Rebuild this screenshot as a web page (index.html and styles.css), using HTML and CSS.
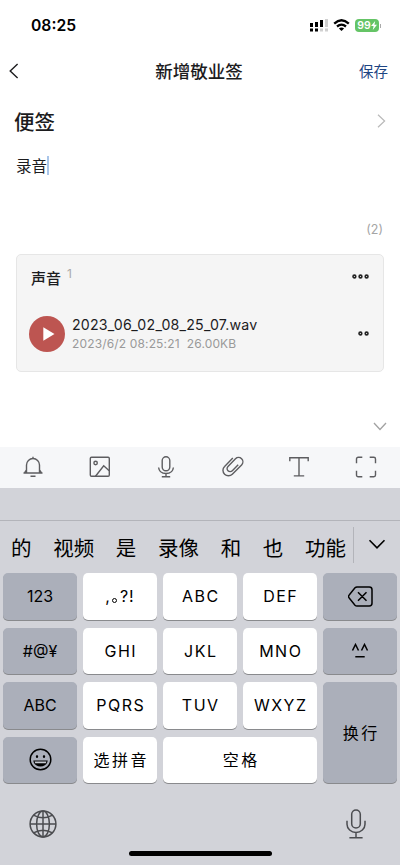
FILE: index.html
```html
<!DOCTYPE html>
<html lang="zh-CN">
<head>
    <meta charset="UTF-8">
    <meta name="viewport" content="width=device-width, initial-scale=1.0">
    <title>新增敬业签</title>
    <link rel="stylesheet" href="styles.css">
</head>
<body>
    <div class="status-bar">
        <span class="time">08:25</span>
        <div class="status-icons">
            <svg class="signal" width="18" height="13" viewBox="0 0 18 13">
                <path d="M0 4h3v4H0zM5 3h3v5H5zM10 1h3v7h-3zM0 9.5h3v3H0zM5 9.5h3v3H5z" fill="#000"/>
                <path d="M15 0h3v8h-3zM10 9.5h3v3h-3zM15 9.5h3v3h-3z" fill="#d0d0d0"/>
            </svg>
            <svg class="wifi" width="17" height="13" viewBox="0 0 17 13">
                <path d="M1.2 4.6Q8.5-2 15.8 4.6M4 7.5q4.5-3.8 9 0" fill="none" stroke="#000" stroke-width="2.3"/>
                <path d="M5.9 9.4q2.6-2 5.2 0L8.5 12z" fill="#000"/>
            </svg>
            <div class="battery">
                <span>99</span>
                <svg width="6" height="9" viewBox="0 0 6 9"><path d="M4.2 0L0 5h2.6L1.8 9 6 3.8H3.4z" fill="#fff"/></svg>
            </div>
            <i class="battery-cap"></i>
        </div>
    </div>

    <header class="nav">
        <svg class="back" width="10" height="16" viewBox="0 0 10 16"><path d="M8.6 1L1.2 8l7.4 7"/></svg>
        <h1>新增敬业签</h1>
        <span class="save">保存</span>
    </header>

    <main class="note">
        <div class="category">
            <h2>便签</h2>
            <svg width="9" height="14" viewBox="0 0 9 14"><path d="M1 .8L7.6 7 1 13.2"/></svg>
        </div>
        <div class="content"><span>录音</span><i class="caret"></i></div>
        <div class="count">(2)</div>
        <section class="card">
            <div class="card-head">
                <h3>声音</h3>
                <span class="num">1</span>
                <svg class="dots" width="17" height="5" viewBox="0 0 17 5"><circle cx="2.4" cy="2.5" r="1.4"/><circle cx="8.5" cy="2.5" r="1.4"/><circle cx="14.6" cy="2.5" r="1.4"/></svg>
            </div>
            <div class="file">
                <svg class="play" width="36" height="36" viewBox="0 0 36 36"><circle cx="18" cy="18" r="18" fill="#bd5551"/><path d="M14.3 11.2L25.5 18l-11.2 6.8z" fill="#fff"/></svg>
                <div class="file-info">
                    <div class="file-name">2023_06_02_08_25_07.wav</div>
                    <div class="file-meta">2023/6/2 08:25:21&nbsp; 26.00KB</div>
                </div>
                <svg class="dots" width="11" height="5" viewBox="0 0 11 5"><circle cx="2.4" cy="2.5" r="1.4"/><circle cx="8.6" cy="2.5" r="1.4"/></svg>
            </div>
        </section>
        <svg class="collapse" width="14" height="9" viewBox="0 0 14 9"><path d="M1 1l6 6.5L13 1"/></svg>
    </main>

    <div class="toolbar">
        <svg viewBox="0 0 22 22"><path d="M4.5 17V9a6.5 6.5 0 0 1 13 0v8M11 2.5V.8M1.5 17h19M8.5 20.3h5M4.5 14l-2 3M17.5 14l2 3"/></svg>
        <svg viewBox="0 0 22 22"><rect x="1.3" y="1.3" width="19" height="19" rx="1.2"/><circle cx="6.6" cy="7" r="1.7"/><path d="M6.5 20.3l8.2-10.5 5.5 5"/></svg>
        <svg viewBox="0 0 22 22"><rect x="7.2" y=".8" width="7.6" height="14" rx="3.8"/><path d="M3.6 11.5c.4 3.8 3.4 6 7.4 6s7-2.2 7.4-6M11 17.5v3M6.8 20.7h8.4"/></svg>
        <svg viewBox="0 0 22 22"><path d="M10.8 2L2.6 10.4a5.4 5.4 0 0 0 0 7.8 5.4 5.4 0 0 0 7.7 0l9.3-9.3a4.3 4.3 0 0 0-6.1-6.1L6 10.4a3 3 0 0 0 0 4.3 3 3 0 0 0 4.3 0l5.9-6"/></svg>
        <svg viewBox="0 0 22 22"><path d="M1.8 5.2V1.7h18.4v3.5M11 1.7v18.2M5.8 19.9h10.4"/></svg>
        <svg class="scan" viewBox="0 0 22 22"><path d="M1.5 7.3V3a1.7 1.7 0 0 1 1.7-1.7h4.1M14.7 1.3h4.1A1.7 1.7 0 0 1 20.5 3v4.3M20.5 14.7V19a1.7 1.7 0 0 1-1.7 1.7h-4.1M7.3 20.7H3.2A1.7 1.7 0 0 1 1.5 19v-4.3"/></svg>
    </div>

    <div class="keyboard">
        <div class="accessory"></div>
        <div class="candidates">
            <div class="words">
                <span>的</span><span>视频</span><span>是</span><span>录像</span><span>和</span><span>也</span><span>功能</span>
            </div>
            <div class="more"><svg width="18" height="11" viewBox="0 0 18 11"><path d="M1.5 1.2L9 8.8l7.5-7.6"/></svg></div>
        </div>
        <div class="keys">
            <div class="key dark">123</div>
            <div class="key punct">,<b></b>?!</div>
            <div class="key letters">ABC</div>
            <div class="key letters">DEF</div>
            <div class="key dark">
                <svg width="25" height="21" viewBox="0 0 25 21"><path d="M9 1h12.3A2.7 2.7 0 0 1 24 3.7v13.6a2.7 2.7 0 0 1-2.7 2.7H9a3 3 0 0 1-2-.8L1.2 12a2 2 0 0 1 0-3L7 1.8A3 3 0 0 1 9 1zM10 6.2l8.5 8.6M18.5 6.2L10 14.8"/></svg>
            </div>
            <div class="key dark">#@¥</div>
            <div class="key letters">GHI</div>
            <div class="key letters">JKL</div>
            <div class="key letters">MNO</div>
            <div class="key dark">
                <svg width="18" height="15" viewBox="0 0 18 15"><path d="M1.5 7.5l3-6 3 6M10.5 7.5l3-6 3 6M4.3 13.8h9.4"/></svg>
            </div>
            <div class="key dark">ABC</div>
            <div class="key letters">PQRS</div>
            <div class="key letters">TUV</div>
            <div class="key letters">WXYZ</div>
            <div class="key dark zh enter">换行</div>
            <div class="key dark">
                <svg width="23" height="23" viewBox="0 0 23 23"><circle cx="11.5" cy="11.5" r="10.3"/><path d="M4.3 12.5h14.4c-.4 3.8-3.4 6-7.2 6s-6.8-2.2-7.2-6z" fill="#000" stroke="none"/><path d="M5.6 13.6h11.8l-.6 1.7H6.2z" fill="#c6c9d1" stroke="none"/><ellipse cx="8" cy="8.5" rx="1.1" ry="1.5" fill="#000" stroke="none"/><ellipse cx="15" cy="8.5" rx="1.1" ry="1.5" fill="#000" stroke="none"/></svg>
            </div>
            <div class="key zh">选拼音</div>
            <div class="key zh space">空格</div>
        </div>
        <div class="bottom">
            <svg class="globe" width="28" height="28" viewBox="0 0 28 28"><circle cx="14" cy="14" r="12.9"/><ellipse cx="14" cy="14" rx="6.4" ry="12.9"/><path d="M14 1v26M1 14h26M4.5 5.2q9.5 5.3 19 0M4.5 22.8q9.5-5.3 19 0"/></svg>
            <svg class="mic" width="20" height="30" viewBox="0 0 20 30"><rect x="5.7" y="1" width="8.6" height="18" rx="4.3"/><path d="M1 11.8v3.4a9 8.3 0 0 0 18 0v-3.4M10 23.5v5M3.4 28.7h13.2"/></svg>
        </div>
        <div class="home-bar"></div>
    </div>
</body>
</html>
```

FILE: styles.css
```css
* {
    box-sizing: border-box;
}
body {
    margin: 0;
    width: 400px;
    height: 865px;
    display: flex;
    flex-direction: column;
    overflow: hidden;
    background: #fff;
    color: #1c1c1e;
    font-family: Inter, "Noto Sans CJK SC", sans-serif;
}
h1, h2, h3 {
    margin: 0;
    font-weight: 500;
}
svg {
    display: block;
    flex: none;
    fill: none;
}

/* status bar */
.status-bar {
    height: 50px;
    padding: 1px 19px 0 31px;
    display: flex;
    align-items: center;
    justify-content: space-between;
}
.time {
    font-size: 15.7px;
    font-weight: 600;
    color: #000;
    line-height: 20px;
}
.status-icons {
    display: flex;
    align-items: center;
}
.wifi {
    margin: 0 5px 0 5px;
}
.battery {
    width: 24px;
    height: 13px;
    border-radius: 4px;
    background: #65c466;
    color: #fff;
    font-size: 10.5px;
    font-weight: 600;
    line-height: 13px;
    display: flex;
    align-items: center;
    justify-content: center;
}
.battery-cap {
    width: 1px;
    height: 4px;
    margin-left: 1px;
    background: #aaa;
}

/* navigation */
.nav {
    height: 42px;
    padding: 1px 12px 0 9px;
    display: grid;
    grid-template-columns: 60px 1fr 60px;
    align-items: center;
}
.nav h1 {
    padding-left: 1px;
    font-size: 17.5px;
    line-height: 26px;
    text-align: center;
}
.back {
    margin-top: -1px;
    stroke: #1c1c1e;
    stroke-width: 1.4;
}
.save {
    font-size: 14.5px;
    line-height: 22px;
    text-align: right;
    color: #1d4583;
}

/* note */
.note {
    height: 355px;
    padding: 0 16px;
    display: flex;
    flex-direction: column;
}
.category {
    height: 58px;
    padding: 0 14px 0 0;
    margin: 0 -16px 0 -2px;
    display: flex;
    align-items: center;
    justify-content: space-between;
}
.category h2 {
    margin-top: 3px;
    font-size: 20.5px;
    line-height: 30px;
}
.category svg {
    stroke: #b9b9b9;
    stroke-width: 1.2;
}
.content {
    height: 70px;
    padding-top: 6px;
    display: flex;
    align-items: flex-start;
    font-size: 15.5px;
    line-height: 22px;
}
.caret {
    width: 2px;
    height: 19px;
    background: #a9c5e9;
}
.count {
    height: 34px;
    padding: 1px 1px 0 0;
    text-align: right;
    font-size: 12.5px;
    line-height: 18px;
    color: #a5a5a5;
}
.card {
    height: 118px;
    border: 1px solid #e6e6e6;
    border-radius: 5px;
    background: #f5f5f5;
    padding: 0 14px 0 12px;
}
.card-head {
    height: 48px;
    padding-left: 2px;
    display: flex;
    align-items: center;
}
.card-head h3 {
    font-size: 15px;
    line-height: 22px;
}
.num {
    margin: -10px 0 0 6px;
    font-size: 12px;
    line-height: 14px;
    color: #aaa;
}
.dots {
    margin-left: auto;
    stroke: #222;
    stroke-width: 1.6;
}
.card-head .dots {
    margin-top: -6px;
}
.file {
    height: 61px;
    display: flex;
    align-items: center;
}
.file-info {
    margin-left: 7px;
}
.file-name {
    font-size: 14.2px;
    line-height: 20px;
    letter-spacing: 0.2px;
    white-space: nowrap;
}
.file-meta {
    font-size: 12px;
    line-height: 18px;
    letter-spacing: 0.15px;
    color: #999;
    white-space: nowrap;
}
.collapse {
    align-self: flex-end;
    margin: 50px -3px 0 0;
    stroke: #a2a2a2;
    stroke-width: 1.3;
}

/* toolbar */
.toolbar {
    height: 41px;
    padding: 0 23px 1px 22px;
    display: flex;
    align-items: center;
    justify-content: space-between;
    background: #f6f7f9;
}
.toolbar svg {
    width: 22px;
    height: 22px;
    stroke: #5d5d60;
    stroke-width: 1.4;
}

/* keyboard */
.keyboard {
    flex: 1;
    display: flex;
    flex-direction: column;
    background: #d2d3d9;
    color: #000;
}
.accessory {
    height: 33px;
    border-bottom: 1px solid #b3b4ba;
}
.candidates {
    height: 52px;
    display: flex;
}
.words {
    width: 354px;
    height: 36px;
    margin-top: 6px;
    padding: 7px 7px 0 11px;
    border-right: 1px solid #b3b4ba;
    display: flex;
    justify-content: space-between;
    align-items: center;
    font-size: 20.5px;
    line-height: 30px;
}
.more {
    flex: 1;
    height: 46px;
    display: flex;
    align-items: center;
    justify-content: center;
}
.more svg {
    stroke: #000;
    stroke-width: 1.6;
}
.keys {
    padding: 0 3px;
    display: grid;
    grid-template-columns: repeat(5, 74px);
    grid-template-rows: repeat(4, 47.5px);
    gap: 7px 6px;
}
.key {
    display: flex;
    align-items: center;
    justify-content: center;
    border-radius: 5px;
    background: #fff;
    box-shadow: 0 1px 0 #898a8d;
    margin-bottom: 1px;
    font-size: 16px;
    line-height: 24px;
}
.key svg {
    stroke: #000;
    stroke-width: 1.5;
}
.dark {
    background: #abafba;
}
.letters {
    letter-spacing: 1.5px;
    padding-left: 1.5px;
}
.punct {
    letter-spacing: 1px;
}
.punct b {
    width: 5px;
    height: 5px;
    margin: 8px 3px 0 1px;
    border: 1.2px solid #000;
    border-radius: 50%;
}
.zh {
    letter-spacing: 2.5px;
    padding: 1px 0 0 2.5px;
}
.enter {
    grid-row: 3 / 5;
    grid-column: 5;
}
.space {
    grid-column: 3 / 5;
}
.bottom {
    height: 67px;
    padding: 12px 34px 0 29px;
    display: flex;
    align-items: center;
    justify-content: space-between;
}
.bottom svg {
    stroke: #4b4c50;
    stroke-width: 1.5;
}
.home-bar {
    width: 143px;
    height: 5px;
    margin: 0 auto;
    border-radius: 3px;
    background: #000;
}
```
